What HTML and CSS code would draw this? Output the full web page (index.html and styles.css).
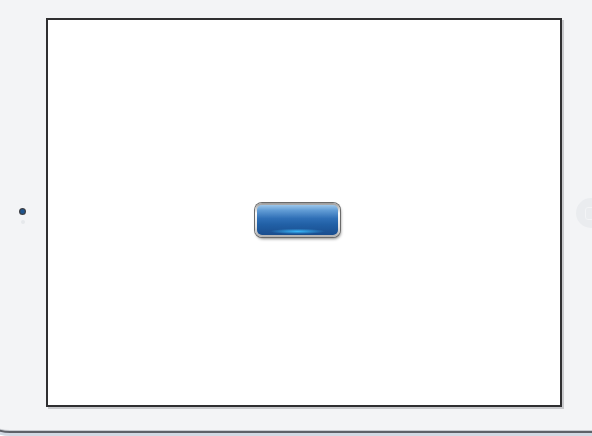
FILE: index.html
```html
<!DOCTYPE html>
<html>
<head>
<meta charset="utf-8">
<link rel="stylesheet" href="styles.css">
</head>
<body>
<div class="device">
  <div class="bezel-left">
    <span class="camera"></span>
    <span class="sensor"></span>
  </div>
  <div class="screen">
    <div class="btn"><div class="btn-inner"></div></div>
  </div>
  <div class="bezel-right">
    <span class="home"><span class="home-square"></span></span>
  </div>
</div>
</body>
</html>
```
FILE: styles.css
```css
html, body {
  margin: 0;
  padding: 0;
  background: #ffffff;
  overflow: hidden;
  width: 592px;
  height: 436px;
}
.device {
  display: flex;
  align-items: center;
  box-sizing: border-box;
  width: 700px;
  height: 450px;
  margin-left: -30px;
  margin-top: -20px;
  padding: 38px 0 23px 30px;
  background: #f3f4f6;
  border-radius: 40px;
  box-shadow: 0 1px 0 #c9ccd1, 0 3px 0 #5e6168, 0 6px 0 #d2d9e3;
}
.bezel-left {
  width: 46px;
  height: 389px;
  display: flex;
  flex-direction: column;
  align-items: center;
  justify-content: center;
  gap: 5px;
}
.camera {
  width: 7px;
  height: 7px;
  border-radius: 50%;
  background: radial-gradient(circle, #1f5590 0 30%, #3a3d43 60%, #5a5d63 100%);
  margin-top: 7px;
  margin-left: -1px;
}
.sensor {
  width: 4px;
  height: 4px;
  border-radius: 50%;
  background: #e6e8eb;
  margin-left: -1px;
}
.screen {
  box-sizing: border-box;
  width: 516px;
  height: 389px;
  border: 2px solid #2f2f31;
  background: #ffffff;
  box-shadow: 2px 2px 0 #c8c9cc;
  padding: 183px 0 0 207px;
}
.btn {
  box-sizing: border-box;
  width: 85px;
  height: 34px;
  padding: 2px;
  border-radius: 7px;
  background: linear-gradient(#9a9a9a, #fafafa 30%, #e2e2e2 70%, #b0b0b0);
  box-shadow: 0 0 0 1px #6a6a6a, 1px 2px 3px rgba(0,0,0,0.45);
}
.btn-inner {
  height: 100%;
  border-radius: 5px;
  background:
    radial-gradient(ellipse 34% 9% at 50% 88%, rgba(60,190,255,0.95), rgba(60,190,255,0) 100%),
    linear-gradient(#9cc6ea 0%, #619cd5 18%, #2f6fb6 45%, #2160a6 65%, #1a4d8e 100%);
}
.bezel-right {
  display: flex;
  align-items: center;
  padding-left: 14px;
}
.home {
  width: 30px;
  height: 30px;
  border-radius: 50%;
  background: #eaecef;
  display: flex;
  align-items: center;
  justify-content: center;
  margin-top: 1px;
}
.home-square {
  width: 11px;
  height: 11px;
  border-radius: 3px;
  border: 1px solid #f3f4f6;
}
```
